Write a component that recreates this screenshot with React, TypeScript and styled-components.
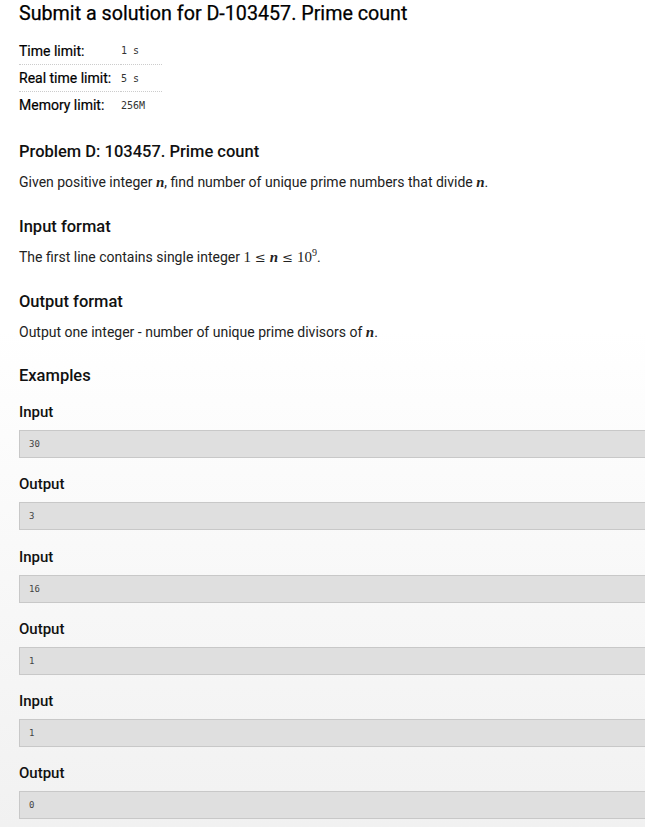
import React from 'react';
import styled, { createGlobalStyle } from 'styled-components';

const GlobalStyle = createGlobalStyle`
  html, body {
    margin : 0;
    padding : 0;
  }
  body {
    font-family : Roboto, "Liberation Sans", sans-serif;
    color : #222;
    background : linear-gradient(180deg, #ffffff 0px, #ffffff 330px, #f1f1f1 827px);
    min-height : 827px;
    overflow : hidden;
  }
`;

const Wrapper = styled.div`
  padding : 0 0 0 19px;
  overflow : hidden;
`;

const Title = styled.h1`
  margin : 0;
  padding-top : 1px;
  font-size : 19.7px;
  font-weight : 400;
  line-height : 26px;
  color : #000;
  -webkit-text-stroke : 0.25px #000;
`;

const LimitTable = styled.table`
  margin-top : 10px;
  border-collapse : collapse;
  width : 143px;
`;

const LimitRow = styled.tr`
  & + & td {
    border-top : 1px dotted #ccc;
    height : 26px;
  }
`;

const LimitLabel = styled.td`
  padding : 0;
  height : 27px;
  font-size : 14px;
  font-weight : 400;
  white-space : nowrap;
  width : 98px;
  padding-right : 4px;
  color : #000;
  -webkit-text-stroke : 0.2px #000;
`;

const LimitValue = styled.td`
  padding : 0;
  font-family : "DejaVu Sans Mono", "Liberation Mono", monospace;
  font-size : 10px;
  white-space : pre;
  color : #333;
`;

const Heading = styled.h2`
  margin : 0;
  font-size : 16.5px;
  font-weight : 500;
  line-height : 24px;
  color : #111;
`;

const Section = styled.div<{ $top: number }>`
  margin-top : ${(p) => p.$top}px;
`;

const Para = styled.p`
  margin : 8px 0 0 0;
  font-size : 14px;
  line-height : 20px;
`;

const MathVar = styled.span`
  font-family : "Liberation Serif", "DejaVu Serif", serif;
  font-style : italic;
  font-weight : 700;
  font-size : 15px;
`;

const MathText = styled.span`
  font-family : "Liberation Serif", "DejaVu Serif", serif;
  font-size : 15px;
`;

const MathOp = styled.span`
  font-family : "DejaVu Serif", "Liberation Serif", serif;
  font-size : 13px;
  margin : 0 4px;
`;

const Sup = styled.sup`
  font-size : 10px;
  vertical-align : 6px;
  line-height : 0;
`;

const ExampleLabel = styled.div<{ $first?: boolean }>`
  font-size : 15px;
  font-weight : 500;
  line-height : 20px;
  margin-top : ${(p) => (p.$first ? 14 : 16.3)}px;
  color : #111;
`;

const CodeBox = styled.pre`
  margin : 8px 0 0 0;
  width : calc(100% + 40px);
  box-sizing : border-box;
  height : 28px;
  padding : 0 0 0 9px;
  background : #dfdfdf;
  border : 1px solid #c8c8c8;
  font-family : "DejaVu Sans Mono", "Liberation Mono", monospace;
  font-size : 9px;
  line-height : 26px;
  color : #444;
`;

const examples = [
  ['30', '3'],
  ['16', '1'],
  ['1', '0'],
];

export default function App() {
  return (
    <>
      <GlobalStyle />
      <Wrapper>
        <Title>Submit a solution for D-103457. Prime count</Title>
        <LimitTable>
          <tbody>
            <LimitRow>
              <LimitLabel>Time limit:</LimitLabel>
              <LimitValue>1 s</LimitValue>
            </LimitRow>
            <LimitRow>
              <LimitLabel>Real time limit:</LimitLabel>
              <LimitValue>5 s</LimitValue>
            </LimitRow>
            <LimitRow>
              <LimitLabel>Memory limit:</LimitLabel>
              <LimitValue>256M</LimitValue>
            </LimitRow>
          </tbody>
        </LimitTable>

        <Section $top={22}>
          <Heading>Problem D: 103457. Prime count</Heading>
          <Para>
            Given positive integer <MathVar>n</MathVar>, find number of unique prime numbers that divide{' '}
            <MathVar>n</MathVar>.
          </Para>
        </Section>

        <Section $top={23}>
          <Heading>Input format</Heading>
          <Para>
            The first line contains single integer <MathText>1</MathText>
            <MathOp>≤</MathOp>
            <MathVar>n</MathVar>
            <MathOp>≤</MathOp>
            <MathText>
              10<Sup>9</Sup>
            </MathText>
            .
          </Para>
        </Section>

        <Section $top={22}>
          <Heading>Output format</Heading>
          <Para>
            Output one integer - number of unique prime divisors of <MathVar>n</MathVar>.
          </Para>
        </Section>

        <Section $top={22}>
          <Heading>Examples</Heading>
          {examples.map(([input, output], i) => (
            <div key={i}>
              <ExampleLabel $first={i === 0}>Input</ExampleLabel>
              <CodeBox>{input}</CodeBox>
              <ExampleLabel>Output</ExampleLabel>
              <CodeBox>{output}</CodeBox>
            </div>
          ))}
        </Section>
      </Wrapper>
    </>
  );
}
